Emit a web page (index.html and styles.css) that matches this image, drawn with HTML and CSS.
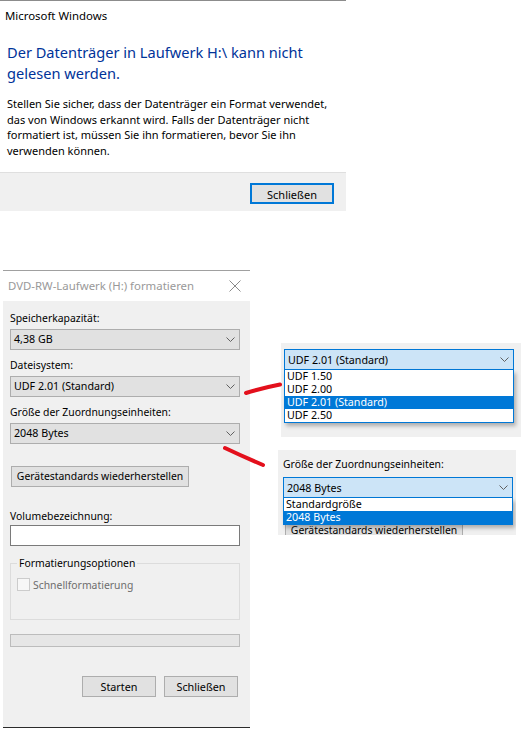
FILE: index.html
```html
<!DOCTYPE html>
<html lang="de">
<head>
<meta charset="utf-8">
<title>Datenträger formatieren</title>
<link rel="stylesheet" href="styles.css">
</head>
<body>

<!-- Message box: unreadable disc -->
<div class="msgbox">
  <div class="msg-title">Microsoft Windows</div>
  <div class="instruction">Der Datenträger in Laufwerk H:\ kann nicht<br>gelesen werden.</div>
  <p class="msg-text">Stellen Sie sicher, dass der Datenträger ein Format verwendet,<br>das von Windows erkannt wird. Falls der Datenträger nicht<br>formatiert ist, müssen Sie ihn formatieren, bevor Sie ihn<br>verwenden können.</p>
  <div class="msg-footer">
    <button class="btn btn-default">Schließen</button>
  </div>
</div>

<!-- Format dialog -->
<div class="fmt">
  <div class="fmt-titlebar">
    <span>DVD-RW-Laufwerk (H:) formatieren</span>
    <svg class="close-x" width="12" height="12" viewBox="0 0 12 12"><path d="M0.5 0.5 L11.5 11.5 M11.5 0.5 L0.5 11.5" stroke="#8a8a8a" stroke-width="1" fill="none"/></svg>
  </div>
  <div class="fmt-body">
    <label class="label">Speicherkapazität:</label>
    <div class="select">
      <span>4,38 GB</span>
      <svg class="chev" width="9" height="5" viewBox="0 0 9 5"><path d="M0.5 0.5 L4.5 4.5 L8.5 0.5" stroke="#606060" fill="none"/></svg>
    </div>

    <label class="label gap">Dateisystem:</label>
    <div class="select">
      <span>UDF 2.01 (Standard)</span>
      <svg class="chev" width="9" height="5" viewBox="0 0 9 5"><path d="M0.5 0.5 L4.5 4.5 L8.5 0.5" stroke="#606060" fill="none"/></svg>
    </div>

    <label class="label gap">Größe der Zuordnungseinheiten:</label>
    <div class="select">
      <span>2048 Bytes</span>
      <svg class="chev" width="9" height="5" viewBox="0 0 9 5"><path d="M0.5 0.5 L4.5 4.5 L8.5 0.5" stroke="#606060" fill="none"/></svg>
    </div>

    <button class="btn btn-restore">Gerätestandards wiederherstellen</button>

    <label class="label vol-label">Volumebezeichnung:</label>
    <div class="textbox"></div>

    <fieldset class="group">
      <legend>Formatierungsoptionen</legend>
      <div class="check-row">
        <span class="checkbox"></span>
        <span class="check-label">Schnellformatierung</span>
      </div>
    </fieldset>

    <div class="progress"></div>

    <div class="fmt-actions">
      <button class="btn btn-action">Starten</button>
      <button class="btn btn-action">Schließen</button>
    </div>
  </div>
</div>

<!-- Opened combo box: file system -->
<div class="popup popup-fs">
  <div class="select select-open">
    <span>UDF 2.01 (Standard)</span>
    <svg class="chev" width="9" height="5" viewBox="0 0 9 5"><path d="M0.5 0.5 L4.5 4.5 L8.5 0.5" stroke="#606060" fill="none"/></svg>
  </div>
  <ul class="droplist">
    <li>UDF 1.50</li>
    <li>UDF 2.00</li>
    <li class="sel">UDF 2.01 (Standard)</li>
    <li>UDF 2.50</li>
  </ul>
</div>

<!-- Opened combo box: allocation unit size -->
<div class="popup popup-au">
  <div class="label">Größe der Zuordnungseinheiten:</div>
  <div class="select select-open">
    <span>2048 Bytes</span>
    <svg class="chev" width="9" height="5" viewBox="0 0 9 5"><path d="M0.5 0.5 L4.5 4.5 L8.5 0.5" stroke="#606060" fill="none"/></svg>
  </div>
  <button class="btn btn-restore">Gerätestandards wiederherstellen</button>
  <ul class="droplist droplist-au">
    <li>Standardgröße</li>
    <li class="sel">2048 Bytes</li>
  </ul>
</div>

<!-- Hand-drawn red pointers -->
<svg class="marks" width="525" height="743" viewBox="0 0 525 743">
  <path d="M246 393 Q262 388 280 384.5" stroke="#e3101c" stroke-width="4" stroke-linecap="round" fill="none"/>
  <path d="M225 448 Q244 457 263 465" stroke="#e3101c" stroke-width="4" stroke-linecap="round" fill="none"/>
</svg>

</body>
</html>
```

FILE: styles.css
```css
* {
  box-sizing: border-box;
}

body {
  margin: 0;
  width: 525px;
  height: 743px;
  overflow: hidden;
  position: relative;
  background: #fff;
  font-family: "Noto Sans", "Open Sans", sans-serif;
  font-size: 11px;
  color: #000;
  white-space: nowrap;
}

/* ---------- message box ---------- */
.msgbox {
  width: 346px;
  border-top: 1px solid #8c8c8c;
}

.msg-title {
  height: 32px;
  line-height: 30px;
  padding-left: 5px;
  font-size: 11.4px;
}

.instruction {
  margin: 9px 0 0 7px;
  font-size: 14.6px;
  line-height: 21px;
  color: #003399;
}

.msg-text {
  margin: 12px 0 0 7px;
  line-height: 15.7px;
}

.msg-footer {
  margin-top: 13px;
  height: 39px;
  background: #f0f0f0;
  border-top: 1px solid #dfdfdf;
  display: flex;
  justify-content: flex-end;
  padding: 10px 12px 0 0;
}

/* ---------- buttons ---------- */
.btn {
  font: inherit;
  color: #000;
  height: 21px;
  padding: 0;
  background: #e1e1e1;
  border: 1px solid #adadad;
  line-height: 19px;
  white-space: nowrap;
}

.btn-default {
  width: 84px;
  border: 2px solid #0078d7;
}

.btn-restore {
  display: block;
  width: 178px;
  margin: 22px 0 0 1px;
}

.btn-action {
  width: 74px;
}

/* ---------- format dialog ---------- */
.fmt {
  margin: 59px 0 0 3px;
  width: 247px;
}

.fmt-titlebar {
  height: 31px;
  border-top: 1px solid #a0a0a0;
  background: #fff;
  display: flex;
  align-items: center;
  justify-content: space-between;
  padding: 0 9px 0 5px;
  color: #999;
  font-size: 11.4px;
}

.fmt-body {
  background: #f0f0f0;
  border-bottom: 1px solid #2b2b2b;
  padding: 10px 10px 30px 7px;
  display: flex;
  flex-direction: column;
  font-size: 10.4px;
}

.label {
  display: block;
  height: 15px;
  line-height: 15px;
}

.label.gap {
  margin-top: 8px;
}

.vol-label {
  margin-top: 22px;
}

.select {
  margin-top: 3px;
  width: 230px;
  height: 21px;
  border: 1px solid #adadad;
  background: #e1e1e1;
  display: flex;
  align-items: center;
  justify-content: space-between;
  padding: 0 4px 0 3px;
  font-size: 10.7px;
}

.chev {
  display: block;
}

.textbox {
  margin-top: 1px;
  width: 230px;
  height: 21px;
  background: #fff;
  border: 1px solid #7a7a7a;
}

.group {
  margin: 10px 0 0 0;
  width: 230px;
  height: 64px;
  padding: 0 6px;
  border: 1px solid #dcdcdc;
}

.group legend {
  padding: 0 2px;
  line-height: 15px;
}

.check-row {
  margin-top: 7px;
  display: flex;
  align-items: center;
  gap: 3px;
}

.checkbox {
  width: 13px;
  height: 13px;
  border: 1px solid #cccccc;
  background: #f7f7f7;
}

.check-label {
  color: #6d6d6d;
}

.progress {
  margin-top: 14px;
  width: 230px;
  height: 13px;
  background: #e6e6e6;
  border: 1px solid #bcbcbc;
}

.fmt-actions {
  margin: 29px 2px 0 0;
  display: flex;
  justify-content: flex-end;
  gap: 8px;
  font-size: 10.8px;
}

/* ---------- opened combo boxes ---------- */
.popup {
  position: absolute;
  background: #f0f0f0;
  overflow: hidden;
  font-size: 10.4px;
}

.popup-fs {
  left: 281px;
  top: 343px;
  width: 240px;
  height: 94px;
  padding: 6px 0 0 3px;
}

.popup-au {
  left: 278px;
  top: 450px;
  width: 238px;
  height: 85px;
  padding: 7px 0 0 5px;
}

.popup-au .btn-restore {
  margin: 22px 0 0 2px;
}

.select-open {
  margin-top: 0;
  border-color: #0078d7;
  background: #cce4f7;
}

.popup-au .select-open {
  margin-top: 5px;
}

.droplist {
  list-style: none;
  margin: 0;
  padding: 0;
  width: 230px;
  background: #fff;
  border: 1px solid #0078d7;
  border-top: none;
  box-shadow: 2px 3px 4px rgba(0, 0, 0, 0.28);
  font-size: 10.7px;
}

.popup-au .droplist-au {
  position: absolute;
  left: 5px;
  top: 48px;
}

.droplist li {
  height: 13px;
  line-height: 13px;
  padding-left: 2px;
  white-space: nowrap;
}

.droplist li.sel {
  background: #0078d7;
  color: #fff;
}

/* ---------- annotation strokes ---------- */
.marks {
  position: absolute;
  left: 0;
  top: 0;
  pointer-events: none;
}
```
